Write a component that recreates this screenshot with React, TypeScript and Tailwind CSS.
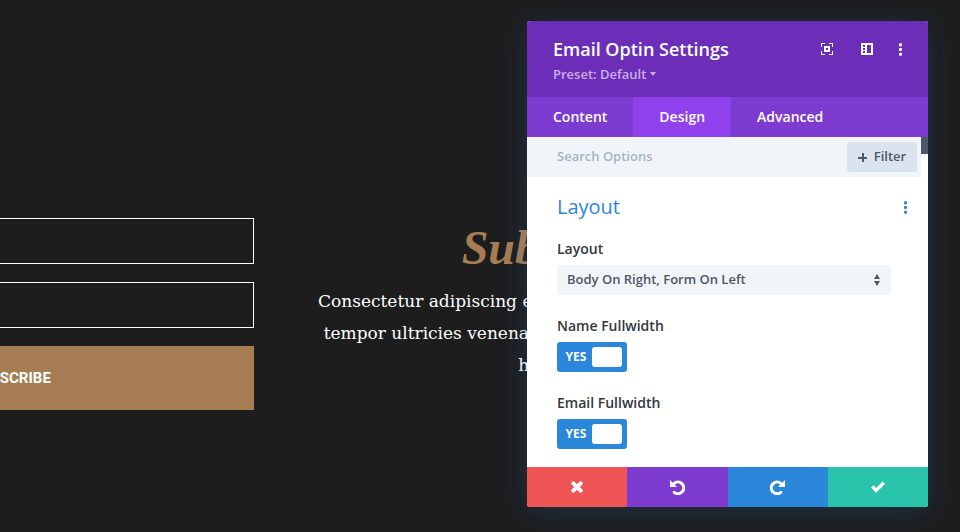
import React, { useState } from 'react';

const tabs = ['Content', 'Design', 'Advanced'];

const FocusIcon = () => (
  <svg width="12" height="12" viewBox="0 0 12 12" shapeRendering="crispEdges" fill="currentColor">
    <path d="M0 0h4v1H1v3H0zM8 0h4v4h-1V1H8zM0 8h1v3h3v1H0zM11 8h1v4H8v-1h3z" />
    <path fillRule="evenodd" d="M3 3h6v6H3zM5 5v2h2V5z" />
  </svg>
);

const SidebarIcon = () => (
  <svg width="12" height="12" viewBox="0 0 12 12" shapeRendering="crispEdges" fill="currentColor">
    <path fillRule="evenodd" d="M0 0h12v12H0zM2 2v2h2V2zM2 5v2h2V5zM2 8v2h2V8zM6 2v8h4V2z" />
  </svg>
);

const DotsIcon = () => (
  <svg width="3" height="13" viewBox="0 0 3 13" fill="currentColor">
    <rect x="0" y="0.3" width="3" height="3" rx="0.9" />
    <rect x="0" y="5" width="3" height="3" rx="0.9" />
    <rect x="0" y="9.7" width="3" height="3" rx="0.9" />
  </svg>
);

const CloseIcon = () => (
  <svg width="12" height="12" viewBox="0 0 12 12" fill="none" stroke="currentColor" strokeWidth="4" strokeLinecap="round">
    <path d="M2.3 2.3l7.4 7.4M9.7 2.3L2.3 9.7" />
  </svg>
);

const UndoIcon = () => (
  <svg width="15" height="15" viewBox="0 0 15 15">
    <path d="M4.2 3.4A5.8 5.8 0 1 1 4.2 12.3" fill="none" stroke="currentColor" strokeWidth="3" strokeLinecap="round" />
    <path d="M0 0L7 6.9H0z" fill="currentColor" />
  </svg>
);

const CheckIcon = () => (
  <svg width="14" height="12" viewBox="0 0 14 12" fill="none" stroke="currentColor" strokeWidth="3.4">
    <path d="M1.2 5.4l4 4L12.8 1.8" />
  </svg>
);

const Toggle = ({ id, label }: { id: string; label: string }) => {
  const [on, setOn] = useState(true);

  return (
    <div>
      <label htmlFor={id} className="block text-sm leading-5 text-[#32373c] mb-[6px] font-semibold">{label}</label>
      <label className={`flex items-center w-[70px] h-[30px] rounded-[3px] pl-[3px] pr-[5px] cursor-pointer ${on ? 'bg-[#2b87da]' : 'flex-row-reverse bg-[#a2b0c1]'}`}>
        <input
          id={id}
          type="checkbox"
          className="sr-only"
          checked={on}
          onChange={e => setOn(e.target.checked)}
        />
        <span className="flex-1 text-center text-xs font-bold text-white">{on ? 'YES' : 'NO'}</span>
        <span className="w-[30px] h-5 rounded-[3px] bg-white"></span>
      </label>
    </div>
  );
};

const SettingsModal = () => {
  const [activeTab, setActiveTab] = useState('Design');

  return (
    <div className="absolute top-[21px] right-8 w-[401px] rounded-[3px] overflow-hidden bg-white font-['Open_Sans',sans-serif] shadow-[0_5px_30px_rgba(43,135,218,0.2)]">
      {/* Header */}
      <div className="h-[76px] bg-[#6c2eb9] px-[26px] pt-4 text-white">
        <div className="flex items-center justify-between">
          <h2 className="text-lg leading-6 font-semibold">Email Optin Settings</h2>
          <div className="flex items-center gap-[26px]">
            <div className="flex gap-7">
              <button aria-label="Expand"><FocusIcon /></button>
              <button aria-label="Dock to side"><SidebarIcon /></button>
            </div>
            <button aria-label="More"><DotsIcon /></button>
          </div>
        </div>
        <button className="flex items-center gap-1 mt-[3px] text-[13px] leading-5 font-semibold text-[#cbb0e9]">
          Preset: Default
          <svg width="6" height="4" viewBox="0 0 6 4" fill="currentColor"><path d="M0 0h6L3 4z" /></svg>
        </button>
      </div>

      {/* Tabs */}
      <div className="flex h-10 bg-[#7e3bd0]">
        {tabs.map(tab => (
          <button
            key={tab}
            onClick={() => setActiveTab(tab)}
            className={`px-[26px] text-sm font-semibold text-white ${tab === activeTab ? 'bg-[#8f42ec]' : ''}`}
          >
            {tab}
          </button>
        ))}
      </div>

      {/* Options */}
      <div className="flex">
        <div className="flex-1 min-w-0">
          <div className="flex items-center h-10 pl-[30px] pr-1 bg-[#f1f5f9]">
            <input
              type="text"
              aria-label="Search Options"
              placeholder="Search Options"
              className="flex-1 min-w-0 text-[13px] font-semibold text-[#4c5866] placeholder:text-[#a5b3c3] outline-none"
            />
            <button className="flex items-center justify-center gap-[7px] w-[70px] h-[30px] rounded-[3px] bg-[#dbe3ee] text-[13px] font-semibold text-[#4c5866]">
              <svg width="9" height="9" viewBox="0 0 9 9" fill="currentColor" shapeRendering="crispEdges"><path d="M4 0h2v4h3v2H6v3H4V6H0V4h4z" /></svg>
              Filter
            </button>
          </div>

          <div className="h-[290px] pt-[15px] pl-[30px] pr-[14px]">
            <div className="flex items-center justify-between mb-[17px]">
              <h3 className="text-xl leading-[30px] text-[#2b87da]">Layout</h3>
              <button aria-label="Layout options" className="text-[#2b87da]"><DotsIcon /></button>
            </div>

            <div className="flex flex-col gap-[21px] pr-4">
              <div>
                <label htmlFor="layout" className="block text-sm leading-5 text-[#32373c] mb-[6px] font-semibold">Layout</label>
                <div className="relative">
                  <select id="layout" className="appearance-none w-full h-[30px] rounded-[3px] bg-[#f1f5f9] px-[10px] text-[13px] font-semibold text-[#4c5866] outline-none">
                    <option>Body On Right, Form On Left</option>
                  </select>
                  <svg className="absolute right-[11px] top-[9px] pointer-events-none text-[#4c5866]" width="6" height="12" viewBox="0 0 6 12" fill="currentColor">
                    <path d="M3 0l3 5H0zM0 7h6l-3 5z" />
                  </svg>
                </div>
              </div>
              <Toggle id="name-fullwidth" label="Name Fullwidth" />
              <Toggle id="email-fullwidth" label="Email Fullwidth" />
            </div>
          </div>
        </div>
        <div className="w-[7px]">
          <div className="h-[17px] bg-[#4c5866]"></div>
        </div>
      </div>

      {/* Footer */}
      <div className="grid grid-cols-4 h-10 text-white">
        <button aria-label="Discard" className="flex items-center justify-center bg-[#ef5555]"><CloseIcon /></button>
        <button aria-label="Undo" className="flex items-center justify-center bg-[#7e3bd0]"><UndoIcon /></button>
        <button aria-label="Redo" className="flex items-center justify-center bg-[#2b87da]"><span className="-scale-x-100"><UndoIcon /></span></button>
        <button aria-label="Save" className="flex items-center justify-center bg-[#29c4a9]"><CheckIcon /></button>
      </div>
    </div>
  );
};

const App: React.FC = () => {
  return (
    <div className="relative min-h-screen overflow-hidden bg-[#1d1d1e]">
      <div className="flex gap-16 pt-[218px] -ml-[228px]">
        <form className="flex flex-col gap-[18px] w-[482px] shrink-0" onSubmit={e => e.preventDefault()}>
          <input type="text" aria-label="Name" className="h-[46px] px-4 border border-white text-white" />
          <input type="email" aria-label="Email" className="h-[46px] px-4 border border-white text-white" />
          <button className="h-16 pr-1 bg-[#a67c52] text-[15px] font-bold text-white font-[Roboto,sans-serif]">SUBSCRIBE</button>
        </form>
        <div className="w-[482px] shrink-0 text-center">
          <h1 className="text-5xl leading-[60px] font-bold italic text-[#a67c52] font-['Liberation_Serif',serif]">Subscribe</h1>
          <p className="mt-[7px] text-[17px] leading-8 text-white whitespace-nowrap font-['DejaVu_Serif',serif]">
            Consectetur adipiscing elit, sed do eiusmod ut labore et<br />
            tempor ultricies venenatis, nulla facilisi sed gravida ut<br />
            hendrerit
          </p>
        </div>
      </div>
      <SettingsModal />
    </div>
  );
};

export default App;
